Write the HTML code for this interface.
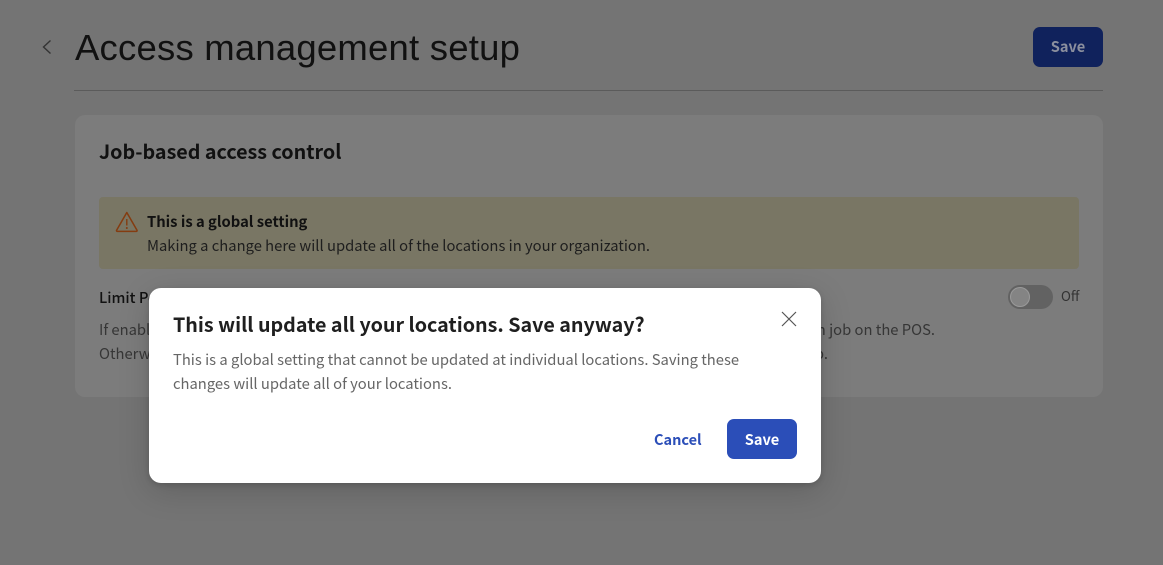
<!DOCTYPE html>
<html><head><meta charset="utf-8">
<style>
html,body{margin:0;padding:0;width:1163px;height:565px;overflow:hidden;background:#747474}
body{position:relative;font-family:"Noto Sans CJK JP","Liberation Sans",sans-serif;color:#1a1a1a}
.t{position:absolute;white-space:nowrap;font-size:14.77px;line-height:24px}
.a{position:absolute}
</style></head>
<body>
<svg class="a" style="left:40px;top:38px" width="14" height="18" viewBox="0 0 14 18"><path d="M10.5 2.5L3.5 9l7 6.5" fill="none" stroke="#333" stroke-width="1.4"/></svg>
<div class="t" style="left:75px;top:24px;font-family:'Liberation Sans',sans-serif;font-size:36.5px;line-height:48px;color:#111;letter-spacing:.21px">Access management setup</div>
<div class="a" style="left:1033px;top:27px;width:70px;height:40px;background:#10225c;border-radius:7px"></div>
<div class="t" style="left:1033px;top:35px;width:70px;text-align:center;font-weight:700;color:#8b8f9e;font-size:14.6px">Save</div>
<div class="a" style="left:74px;top:90px;width:1029px;height:1px;background:#5b5b5b"></div>

<div class="a" style="left:75px;top:115px;width:1028px;height:282px;background:#7c7c7c;border-radius:10px"></div>
<div class="t" style="left:99px;top:136px;font-size:19.7px;line-height:30px;font-weight:700;color:#111">Job-based access control</div>
<div class="a" style="left:99px;top:197px;width:980px;height:72px;background:#797664;border-radius:4px"></div>
<svg class="a" style="left:114px;top:210px" width="26" height="24" viewBox="0 0 26 24"><path d="M12.8 2.5L23 20.2a.8.8 0 0 1-.7 1.2H3.3a.8.8 0 0 1-.7-1.2Z" fill="none" stroke="#843c10" stroke-width="1.5" stroke-linejoin="round"/><path d="M12.8 9v6.5" stroke="#843c10" stroke-width="1.4"/><circle cx="12.8" cy="18" r="1" fill="#843c10"/></svg>
<div class="t" style="left:147px;top:210px;font-weight:700;color:#111">This is a global setting</div>
<div class="t" style="left:147px;top:234px;color:#1e1e1e">Making a change here will update all of the locations in your organization.</div>
<div class="t" style="left:99px;top:286px;font-weight:500;color:#111">Limit Permissions</div>
<div class="t" style="left:99px;top:318px;color:#363636">If enabled, permissions are limited</div>
<div class="t" style="left:99px;top:342px;color:#363636">Otherwise, permissions apply</div>
<div class="t" style="right:228px;top:318px;color:#363636">in job on the POS.</div>
<div class="t" style="right:335px;top:342px;color:#363636">job.</div>
<div class="a" style="left:1008px;top:285px;width:45px;height:24px;background:#626262;border-radius:12px"></div>
<div class="a" style="left:1009px;top:286px;width:18px;height:18px;margin:1px;background:#848484;border:1px solid #9a9a9a;border-radius:50%;box-sizing:content-box"></div>
<div class="t" style="left:1061px;top:284px;font-size:13.3px;color:#333">Off</div>

<div class="a" style="left:149px;top:288px;width:672px;height:195px;background:#fff;border-radius:12px;box-shadow:0 8px 32px rgba(0,0,0,.16),0 2px 6px rgba(0,0,0,.14)"></div>
<div class="t" style="left:173px;top:308px;font-size:19.7px;line-height:32px;font-weight:700;color:#1f1f1f">This will update all your locations. Save anyway?</div>
<svg class="a" style="left:780px;top:310px" width="18" height="18" viewBox="0 0 18 18"><path d="M2 2l14 14M16 2L2 16" fill="none" stroke="#555" stroke-width="1.2"/></svg>
<div class="t" style="left:173px;top:348px;color:#666">This is a global setting that cannot be updated at individual locations. Saving these</div>
<div class="t" style="left:173px;top:372px;color:#666">changes will update all of your locations.</div>
<div class="t" style="left:654px;top:428px;font-weight:700;font-size:14.5px;color:#2b4eb8">Cancel</div>
<div class="a" style="left:727px;top:419px;width:70px;height:40px;background:#2b4eb8;border-radius:7px"></div>
<div class="t" style="left:727px;top:428px;width:70px;text-align:center;font-weight:700;font-size:14.6px;color:#fff">Save</div>
</body></html>
